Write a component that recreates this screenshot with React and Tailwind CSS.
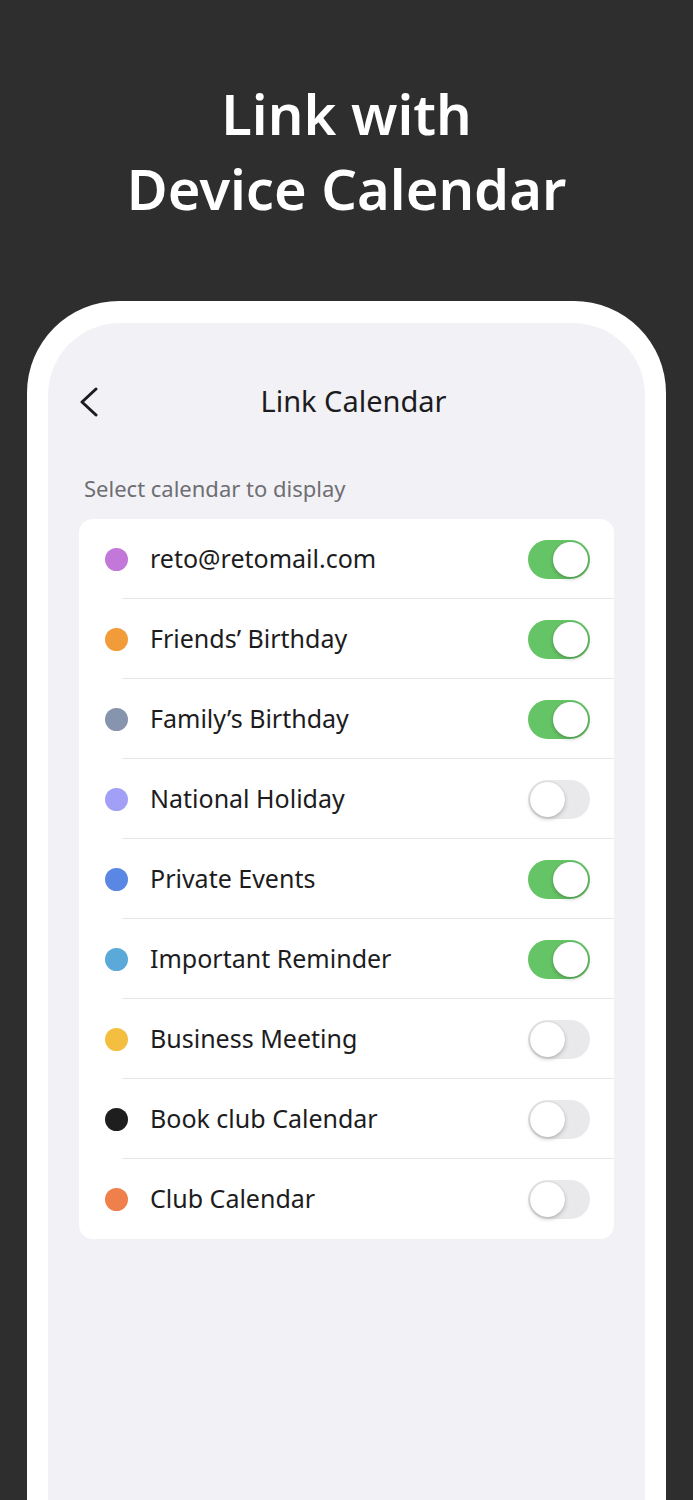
import React from "react";

const items = [
  { name: "reto@retomail.com", color: "bg-[#c178d8]", on: true },
  { name: "Friends\u2019 Birthday", color: "bg-[#f19c38]", on: true },
  { name: "Family\u2019s Birthday", color: "bg-[#8794ad]", on: true },
  { name: "National Holiday", color: "bg-[#a1a0f6]", on: false },
  { name: "Private Events", color: "bg-[#5a87e3]", on: true },
  { name: "Important Reminder", color: "bg-[#5aa9d9]", on: true },
  { name: "Business Meeting", color: "bg-[#f4bf41]", on: false },
  { name: "Book club Calendar", color: "bg-[#1e1e1e]", on: false },
  { name: "Club Calendar", color: "bg-[#f0804b]", on: false },
];

function Toggle({ on }) {
  return (
    <div
      className={
        "relative flex h-[39px] w-[62px] shrink-0 items-center rounded-full px-[2px] " +
        (on ? "justify-end bg-[#65c466]" : "justify-start bg-[#e9e9eb]")
      }
    >
      <div className="h-[35px] w-[35px] rounded-full bg-white shadow-[0_2px_4px_rgba(0,0,0,0.22),0_0_1px_rgba(0,0,0,0.2)]" />
    </div>
  );
}

export default function App() {
  return (
    <div
      className="flex h-[1500px] w-[693px] flex-col overflow-hidden bg-[#2e2e2e]"
      style={{ fontFamily: '"Noto Sans", "Open Sans", sans-serif' }}
    >
      <h1 className="pt-[76px] text-center text-[56px] font-semibold leading-[75px] text-white">
        Link with
        <br />
        Device Calendar
      </h1>
      <div className="mx-[27px] mt-[75px] flex flex-1 flex-col rounded-t-[92px] bg-white px-[21px] pt-[22px]">
        <div className="flex flex-1 flex-col rounded-t-[72px] bg-[#f2f2f6]">
          <div className="relative flex h-[40px] items-center justify-center pl-[14px] mt-[58px] mb-[39px]">
            <svg
              className="absolute left-[30px] top-[6px]"
              width="22"
              height="30"
              viewBox="0 0 22 30"
              fill="none"
            >
              <path d="M18 2 L4 15 L18 28" stroke="#1c1c1e" strokeWidth="3" strokeLinecap="round" strokeLinejoin="round" />
            </svg>
            <span className="text-[29px] leading-[40px] text-[#1c1c1e]">Link Calendar</span>
          </div>
          <div className="pl-[36px] pt-[14px] text-[22px] leading-[28px] text-[#6e6e73]">
            Select calendar to display
          </div>
          <div className="mx-[31px] mt-[17px] overflow-hidden rounded-[14px] bg-white">
            {items.map((it, i) => (
              <div key={i} className="relative flex h-[80px] items-center pl-[26px] pr-[24px]">
                <div className={"h-[23px] w-[23px] shrink-0 rounded-full " + it.color} />
                <span className="mb-[3px] ml-[22px] flex-1 text-[25px] leading-[34px] text-[#1c1c1e]">{it.name}</span>
                <Toggle on={it.on} />
                {i < items.length - 1 && (
                  <div className="absolute bottom-0 left-[43px] right-0 h-[1.5px] bg-[#e6e6e8]" />
                )}
              </div>
            ))}
          </div>
        </div>
      </div>
    </div>
  );
}
